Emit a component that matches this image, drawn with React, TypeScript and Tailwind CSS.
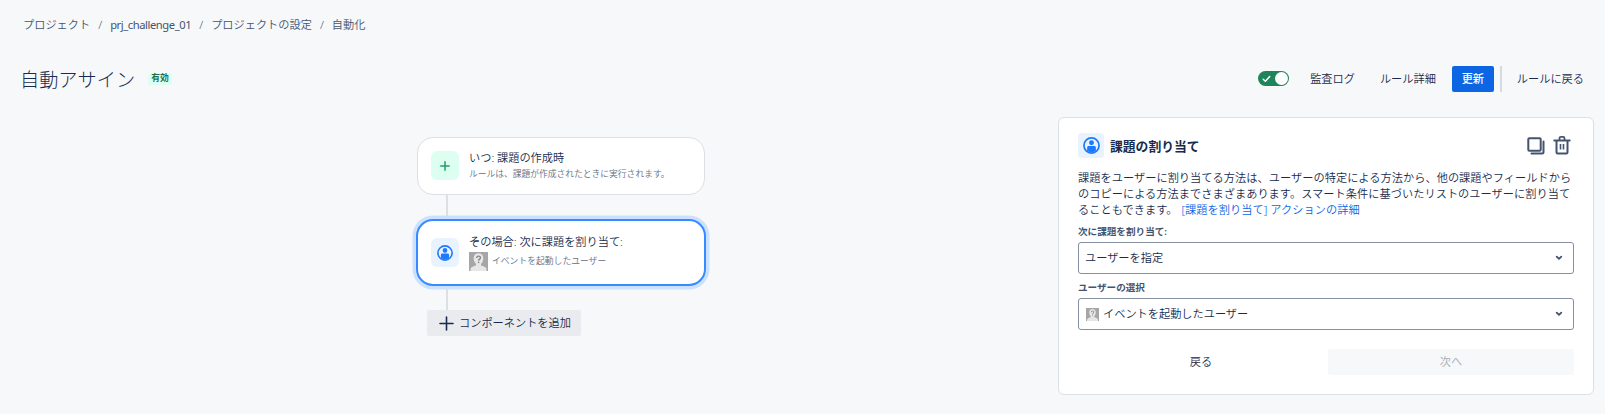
import type { ReactNode } from "react";

const font = "font-['Noto_Sans','Noto_Sans_CJK_JP',sans-serif]";

function UserIcon({ className }: { className?: string }) {
  return (
    <svg viewBox="0 0 16 16" className={className} fill="none">
      <circle cx="8" cy="8" r="7.100" stroke="#1d7afc" strokeWidth="1.600" />
      <circle cx="8" cy="5.400" r="2.300" fill="#1d7afc" />
      <path d="M3.900 10c0-.9.6-1.500 1.500-1.500h5.200c.9 0 1.500.6 1.500 1.500v3c-1.100.900-2.500 1.400-4.100 1.400s-3-.5-4.100-1.400z" fill="#1d7afc" />
    </svg>
  );
}

function Avatar({ className }: { className?: string }) {
  return (
    <svg viewBox="0 0 19 19" className={className}>
      <rect width="19" height="19" fill="#a6a6a6" />
      <path
        d="M9.500 1.300c-3 0-4.800 2-4.800 5 0 2.300.9 4.500 2.300 5.600v1.500c-2.500.5-4.600 1.500-5.500 3.200V19h16v-2.400c-.9-1.700-3-2.700-5.500-3.200v-1.500c1.400-1.100 2.300-3.300 2.300-5.600 0-3-1.800-5-4.800-5z"
        fill="#e6e6e6"
      />
      <path d="M7.700 6.100c0-1.300.8-1.900 1.900-1.900s1.900.6 1.900 1.600c0 1.300-1.900 1.400-1.900 3" fill="none" stroke="#858585" strokeWidth="1.300" />
      <rect x="8.900" y="9.700" width="1.400" height="1.400" fill="#858585" />
    </svg>
  );
}

function Chevron() {
  return (
    <svg viewBox="0 0 8 6" className="h-[6px] w-[8px]" fill="none">
      <path d="M1.700 1.600 4 3.800l2.300-2.200" stroke="#44546f" strokeWidth="1.800" strokeLinecap="round" strokeLinejoin="round" />
    </svg>
  );
}

function Select({ children }: { children: ReactNode }) {
  return (
    <button className="flex h-8 w-full items-center justify-between rounded-[3px] border border-[#8590a2] bg-white pr-[10px] pl-[6px]">
      <span className="flex items-center">{children}</span>
      <Chevron />
    </button>
  );
}

function Breadcrumbs() {
  const items = ["プロジェクト", "prj_challenge_01", "プロジェクトの設定", "自動化"];
  return (
    <nav className="flex h-[50px] items-center pl-[23px] text-[#44546f]">
      {items.map((item, i) => (
        <span key={item} className="flex">
          {i > 0 && <span className="w-5 text-center">/</span>}
          <span className={i === 1 ? "font-normal tracking-[-0.430px]" : ""}>{item}</span>
        </span>
      ))}
    </nav>
  );
}

function Header() {
  return (
    <header className="flex h-[58px] items-center justify-between pr-[21px] pl-[20px]">
      <div className="flex items-center">
        <h1 className="mt-px text-[19.200px] leading-6 font-light">自動アサイン</h1>
        <span className="ml-[13px] flex h-3 items-center rounded-[2px] bg-[#dcfff1] px-[3px] pb-[2px] text-[8.800px] leading-[10px] font-bold text-[#216e4e]">
          有効
        </span>
      </div>
      <div className="flex items-center">
        <button className="mb-px flex h-[15px] w-[31px] items-center justify-between rounded-full bg-[#1f845a] pr-px pl-[4px]">
          <svg viewBox="0 0 9 8" className="h-2 w-[9px]" fill="none">
            <path d="M1.200 4.200 3.400 6.300 7.700 1.500" stroke="#fff" strokeWidth="1.500" strokeLinecap="round" strokeLinejoin="round" />
          </svg>
          <span className="size-[13px] rounded-full bg-white" />
        </button>
        <button className="ml-[21px]">監査ログ</button>
        <button className="ml-[25px]">ルール詳細</button>
        <button className="ml-[16px] h-[26px] w-[42px] rounded-[2px] bg-[#0c66e4] font-medium text-white">更新</button>
        <span className="ml-[6px] h-[26px] w-[2px] bg-[#d5d9e0]" />
        <button className="ml-[15px]">ルールに戻る</button>
      </div>
    </header>
  );
}

function Connector({ className }: { className: string }) {
  return <div className={`ml-[29px] w-[2px] bg-[#dcdfe4] ${className}`} />;
}

function RuleChain() {
  return (
    <section className="ml-[417px] w-[288px] pt-[29px]">
      <div className="flex h-[58px] items-center rounded-[16px] border border-[#dcdfe4] bg-white pl-[13px]">
        <span className="mb-px flex h-[29px] w-7 items-center justify-center rounded-[6px] bg-[#dcfff1] pr-px">
          <svg viewBox="0 0 10 10" className="size-[10px]">
            <path d="M5 .8v8.400M.8 5h8.400" stroke="#22a06b" strokeWidth="1.500" strokeLinecap="round" />
          </svg>
        </span>
        <div className="mb-px ml-[10px]">
          <p className="leading-4">いつ: 課題の作成時</p>
          <p className="text-[8.800px] leading-4 tracking-[-0.040px] text-[#626f86]">ルールは、課題が作成されたときに実行されます。</p>
        </div>
      </div>
      <Connector className="h-[24px]" />
      <div className="-mx-px flex h-[67px] items-start rounded-[17px] border-2 border-[#388bff] bg-white pl-[13px] ring-[3.500px] ring-[#cce0ff]">
        <span className="mt-[17px] flex h-[29px] w-7 items-center justify-center rounded-[6px] bg-[#e9f2ff] pr-px">
          <UserIcon className="size-[16px]" />
        </span>
        <div className="mt-[13px] ml-[10px]">
          <p className="leading-4">その場合: 次に課題を割り当て:</p>
          <div className="mt-[2px] flex items-center">
            <Avatar className="size-[19px]" />
            <span className="-mt-[2px] ml-1 text-[8.800px] leading-4 text-[#626f86]">イベントを起動したユーザー</span>
          </div>
        </div>
      </div>
      <Connector className="h-[24px]" />
      <button className="ml-[10px] flex h-[26px] w-[154px] items-center rounded-[2px] bg-[#e9ebee] pl-[12px]">
        <svg viewBox="0 0 15 15" className="size-[15px]">
          <path d="M7.500 1v13M1 7.500h13" stroke="#172b4d" strokeWidth="1.600" strokeLinecap="round" />
        </svg>
        <span className="ml-[5px]">コンポーネントを追加</span>
      </button>
    </section>
  );
}

function ActionPanel() {
  return (
    <aside className="mt-[9px] mr-[11px] h-[278px] w-[536px] rounded-[6px] border border-[#dcdfe4] bg-white px-[19px] pt-[15px]">
      <div className="flex h-[25px] items-center">
        <span className="flex h-[25px] w-[26px] items-center justify-center rounded-[4px] bg-[#e9f2ff]">
          <UserIcon className="size-[17px]" />
        </span>
        <h2 className="ml-[6px] text-[12.800px] leading-5 font-semibold">課題の割り当て</h2>
        <div className="mr-[3px] ml-auto flex items-center gap-[8px]">
          <svg viewBox="0 0 18 18" className="size-[18px]" fill="none" stroke="#44546f" strokeWidth="2">
            <rect x="1.300" y="1.300" width="12.400" height="12.400" rx="1" />
            <path d="M4.500 16.500h10.500a1.500 1.500 0 0 0 1.500-1.500V4.500" strokeLinecap="round" />
          </svg>
          <svg viewBox="0 0 18 20" className="-mt-px h-[20px] w-[18px]" fill="none" stroke="#44546f">
            <path d="M1.300 5.500h15.400" strokeWidth="2" strokeLinecap="round" />
            <path d="M6.500 5V3.200c0-.9.700-1.400 1.500-1.400h2c.8 0 1.500.5 1.500 1.400V5" strokeWidth="1.800" />
            <path d="M3.500 6v11.200c0 .7.500 1.200 1.200 1.200h8.600c.7 0 1.200-.5 1.200-1.200V6" strokeWidth="2" />
            <path d="M7.500 9v5.500M10.500 9v5.500" strokeWidth="1.600" />
          </svg>
        </div>
      </div>
      <p className="mt-[12px] leading-4 tracking-[0.045px] whitespace-nowrap">
        課題をユーザーに割り当てる方法は、ユーザーの特定による方法から、他の課題やフィールドから
        <br />
        のコピーによる方法までさまざまあります。スマート条件に基づいたリストのユーザーに割り当て
        <br />
        ることもできます。 <a className="ml-px text-[#0c66e4]">[課題を割り当て] アクションの詳細</a>
      </p>
      <label className="mt-[6px] block text-[9.600px] leading-4 font-semibold text-[#44546f]">次に課題を割り当て:</label>
      <div className="mt-[2px]">
        <Select>ユーザーを指定</Select>
      </div>
      <label className="mt-[6px] block text-[9.600px] leading-4 font-semibold text-[#44546f]">ユーザーの選択</label>
      <div className="mt-[2px]">
        <Select>
          <Avatar className="mr-[4px] ml-px size-[13px]" />
          イベントを起動したユーザー
        </Select>
      </div>
      <div className="mt-[19px] flex gap-1">
        <button className="h-[26px] w-[246px]">戻る</button>
        <button className="h-[26px] w-[246px] rounded-[3px] bg-[#f7f8f9] text-[#a5adba]">次へ</button>
      </div>
    </aside>
  );
}

export default function App() {
  return (
    <div lang="ja" className={`h-[414px] w-full overflow-hidden bg-[#f7f8f9] text-[11.200px] leading-4 font-[350] text-[#172b4d] ${font}`}>
      <Breadcrumbs />
      <Header />
      <main className="flex items-start justify-between">
        <RuleChain />
        <ActionPanel />
      </main>
    </div>
  );
}
